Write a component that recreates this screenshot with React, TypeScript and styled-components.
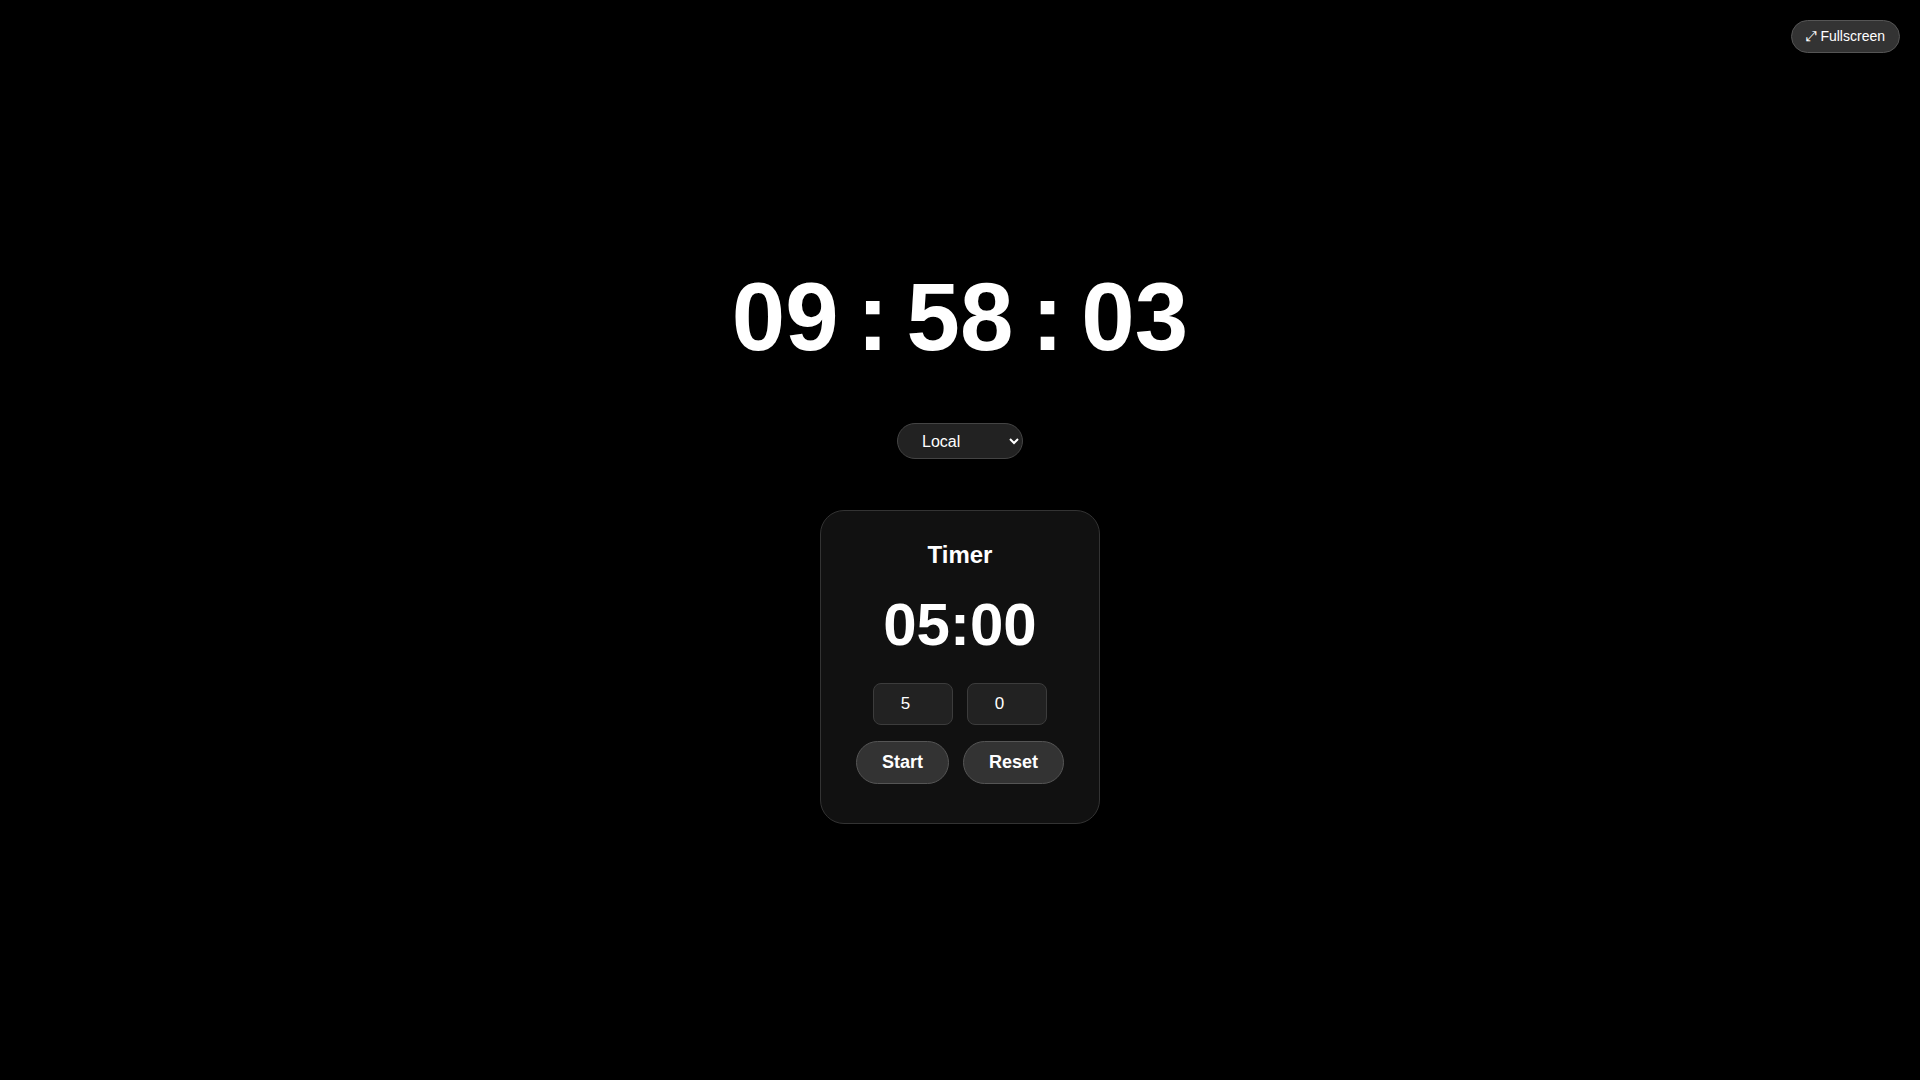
import React, { useState } from 'react'
import styled, { createGlobalStyle } from 'styled-components'

const GlobalStyle = createGlobalStyle`
    html, body {
        margin: 0;
        padding: 0;
        background: #000;
        color: #fff;
        font-family: 'Liberation Sans', Arial, sans-serif;
    }
    #root {
        min-height: 100vh;
    }
`

const Page = styled.main`
    box-sizing: border-box;
    min-height: 100vh;
    padding-top: 6px;
    display: flex;
    flex-direction: column;
    align-items: center;
    justify-content: center;
    gap: 51px;
`

const FullscreenButton = styled.button`
    position: fixed;
    top: 20px;
    right: 20px;
    padding: 8px 14px;
    font-family: 'Liberation Sans', Arial, sans-serif;
    font-size: 14px;
    line-height: 1.1;
    color: #fff;
    background: #333;
    border: 1px solid #555;
    border-radius: 999px;
    cursor: pointer;
`

const Clock = styled.div`
    display: flex;
    align-items: baseline;
    font-size: 96px;
    font-weight: 700;
    line-height: normal;
    color: #fff;
`

const Sep = styled.span`
    margin: 0 18px;
`

const ZoneSelect = styled.select`
    width: 126px;
    height: 36px;
    padding: 0 14px 0 20px;
    font-family: 'Liberation Sans', Arial, sans-serif;
    font-size: 16px;
    color: #fff;
    background: #222;
    border: 1px solid #444;
    border-radius: 999px;
    outline: none;
`

const Card = styled.section`
    box-sizing: border-box;
    width: 280px;
    padding: 30px 28px 39px;
    display: flex;
    flex-direction: column;
    align-items: center;
    background: #111;
    border: 1px solid #333;
    border-radius: 24px;
`

const Title = styled.h2`
    margin: 0 0 21px;
    font-size: 24px;
    font-weight: 700;
    line-height: normal;
`

const Countdown = styled.div`
    margin-bottom: 24px;
    font-size: 60px;
    font-weight: 700;
    line-height: normal;
`

const Row = styled.div<{ $mb?: number }>`
    display: flex;
    justify-content: center;
    gap: 14px;
    margin-bottom: ${p => p.$mb ?? 0}px;
`

const NumInput = styled.input`
    box-sizing: border-box;
    width: 80px;
    height: 42px;
    padding: 10px 8px;
    font-family: 'Liberation Sans', Arial, sans-serif;
    font-size: 17px;
    text-align: center;
    color: #fff;
    background: #222;
    border: 1px solid #3c3c3c;
    border-radius: 8px;
    outline: none;
`

const PillButton = styled.button`
    padding: 10px 25px;
    font-family: 'Liberation Sans', Arial, sans-serif;
    font-size: 18px;
    font-weight: 700;
    line-height: normal;
    color: #fff;
    background: #333;
    border: 1px solid #555;
    border-radius: 999px;
    cursor: pointer;
`

const pad = (n: number) => String(n).padStart(2, '0')

export default function App() {
    const [zone, setZone] = useState('local')
    const [mins, setMins] = useState('5')
    const [secs, setSecs] = useState('0')
    const total = (parseInt(mins) || 0) * 60 + (parseInt(secs) || 0)

    return (
        <>
            <GlobalStyle />
            <FullscreenButton>⤢ Fullscreen</FullscreenButton>
            <Page>
                <Clock>
                    <span>09</span><Sep>:</Sep><span>58</span><Sep>:</Sep><span>03</span>
                </Clock>
                <ZoneSelect value={zone} onChange={e => setZone(e.target.value)}>
                    <option value="local">Local</option>
                    <option value="utc">UTC</option>
                    <option value="ny">New York</option>
                    <option value="london">London</option>
                    <option value="tokyo">Tokyo</option>
                </ZoneSelect>
                <Card>
                    <Title>Timer</Title>
                    <Countdown>{pad(Math.floor(total / 60))}:{pad(total % 60)}</Countdown>
                    <Row $mb={16}>
                        <NumInput type="number" min={0} value={mins} onChange={e => setMins(e.target.value)} />
                        <NumInput type="number" min={0} max={59} value={secs} onChange={e => setSecs(e.target.value)} />
                    </Row>
                    <Row>
                        <PillButton>Start</PillButton>
                        <PillButton>Reset</PillButton>
                    </Row>
                </Card>
            </Page>
        </>
    )
}
